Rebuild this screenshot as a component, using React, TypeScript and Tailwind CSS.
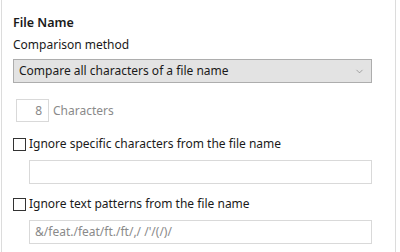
import { ChevronDown } from 'lucide-react';

export default function App() {
  return (
    <div
      className="w-[400px] h-[252px] overflow-hidden bg-white text-[12px] text-[#1a1a1a]"
      style={{ fontFamily: '"Noto Sans", "Liberation Sans", sans-serif' }}
    >
      <div className="mt-[-4px] ml-px mr-[4px] h-[270px] border border-[#dcdcdc] pl-[11px] pr-[23px] pt-[16px]">
        <div className="text-[12.5px] font-semibold leading-[20px]">File Name</div>
        <div className="mt-[2px] leading-[20px]">Comparison method</div>

        <div className="mt-[4px] flex h-[24px] items-center justify-between border border-[#adadad] bg-[#e3e3e3] pl-[5px] pr-[6px]">
          <span>Compare all characters of a file name</span>
          <ChevronDown className="h-[11px] w-[11px] text-[#707070]" strokeWidth={1.25} />
        </div>

        <div className="mt-[16px] ml-[3px] flex items-center gap-[4px] text-[#8a8a8a]">
          <div className="flex h-[23px] w-[33px] items-center justify-end border border-[#d9d9d9] pr-[6px]">8</div>
          <span>Characters</span>
        </div>

        <label className="mt-[14px] flex items-center gap-[3px]">
          <span className="h-[13px] w-[13px] border border-[#333333] bg-white" />
          <span className="leading-[16px]">Ignore specific characters from the file name</span>
        </label>
        <div className="mt-[8px] ml-[16px] h-[24px] border border-[#d9d9d9]" />

        <label className="mt-[12px] flex items-center gap-[3px]">
          <span className="h-[13px] w-[13px] border border-[#333333] bg-white" />
          <span className="leading-[16px]">Ignore text patterns from the file name</span>
        </label>
        <div className="mt-[8px] ml-[16px] flex h-[24px] items-center border border-[#d9d9d9] pl-[5px] text-[#8a8a8a]">
          &amp;/feat./feat/ft./ft/,/ /'/(/)/
        </div>
      </div>
    </div>
  );
}
